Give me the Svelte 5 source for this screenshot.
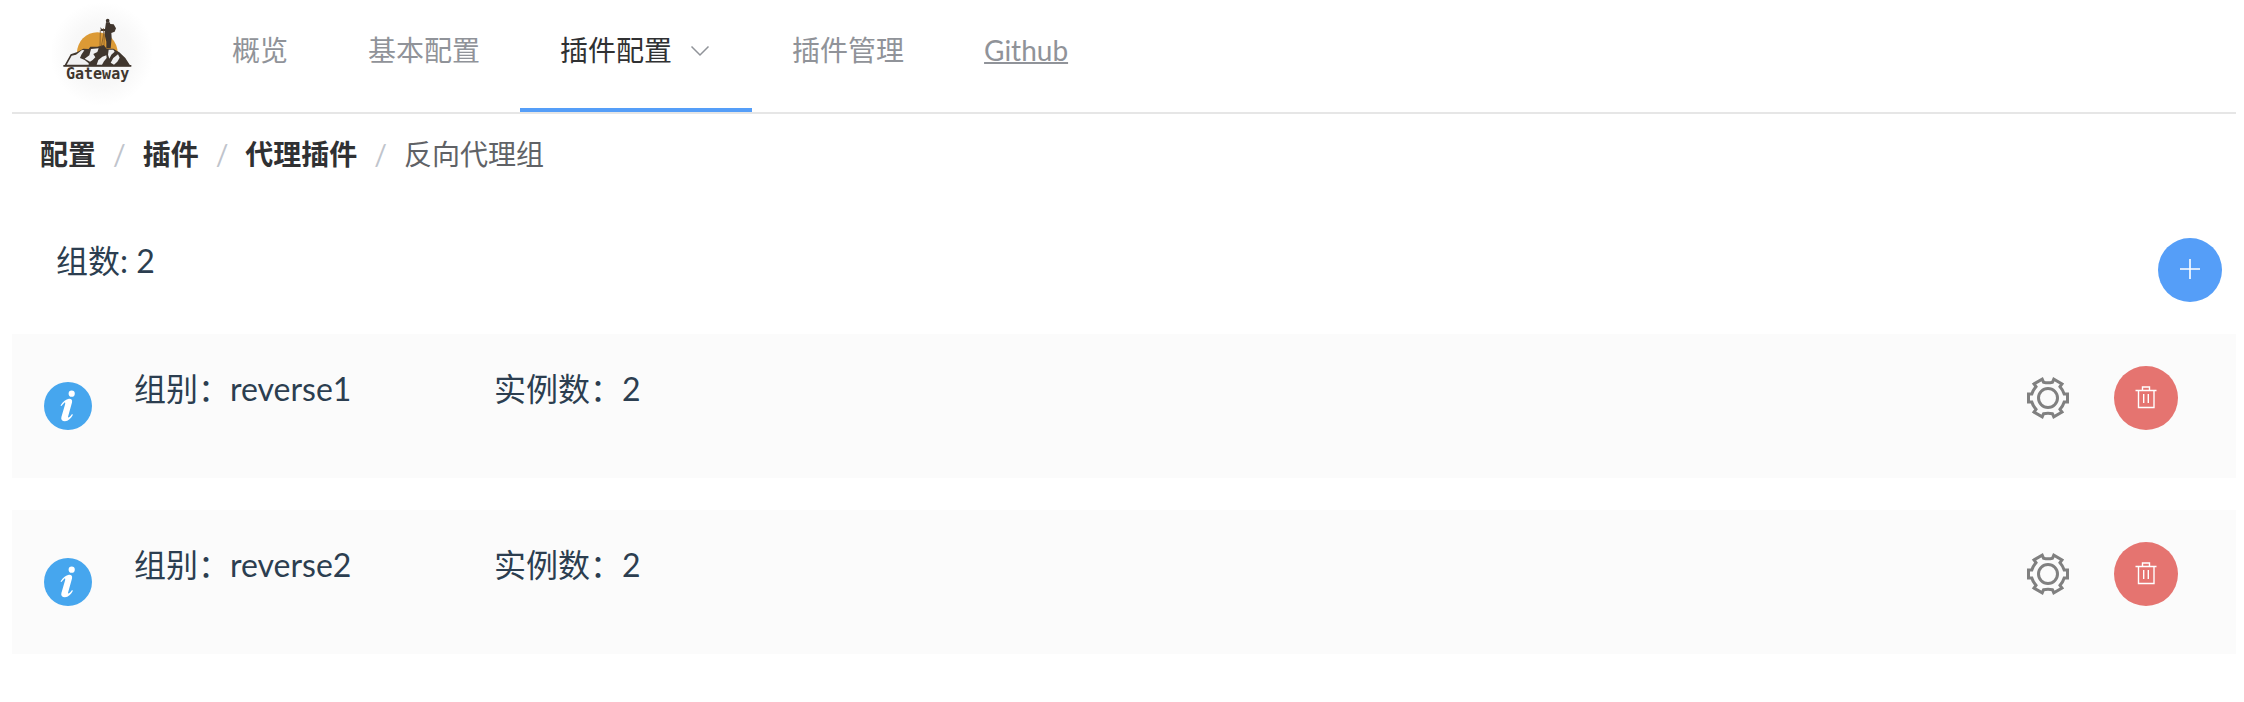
<script>
  const menu = [
    { label: '概览', href: '#overview' },
    { label: '基本配置', href: '#basic' },
    { label: '插件配置', href: '#plugins', active: true, submenu: true },
    { label: '插件管理', href: '#manage' },
    { label: 'Github', href: '#github', external: true }
  ];

  const crumbs = [
    { label: '配置', href: '#config' },
    { label: '插件', href: '#plugin' },
    { label: '代理插件', href: '#proxy' },
    { label: '反向代理组' }
  ];

  let groups = $state([
    { name: 'reverse1', instances: 2 },
    { name: 'reverse2', instances: 2 }
  ]);

  function addGroup() {
    groups.push({ name: `reverse${groups.length + 1}`, instances: 0 });
  }

  function removeGroup(index) {
    groups.splice(index, 1);
  }
</script>

<div class="page">
  <header class="topbar">
    <svg class="logo" viewBox="-18 -42 300 324" role="img" aria-label="Gateway">
      <defs>
        <radialGradient id="halo">
          <stop offset="0" stop-color="#f4f4f5" />
          <stop offset="0.6" stop-color="#f8f8f8" />
          <stop offset="1" stop-color="#ffffff" />
        </radialGradient>
      </defs>
      <circle cx="132" cy="120" r="156" fill="url(#halo)" />
      <path d="M57 116a61 61 0 1 1 122 0l-20 14H70z" fill="#dc9a35" />
      <g fill="#40362e">
        <path d="M18 157L38 121L58 114L76 104L92 105L97 98L118 98L137 93L146 104L166 104L184 115L202 132L218 157z" />
        <path d="M16 153h204v5H16z" />
        <circle cx="149" cy="20" r="5.500" />
        <path d="M144 25h11l2 5 10 1 7 12-4 10-10 4 1 14-3 32h-13v-20l-4-16v-16l-12 0-2-11 5 5 9 0z" />
      </g>
      <path d="M136 42l1 18-7 38M139 52l-1 44M127 48l-1 50" fill="none" stroke="#6b4c25" stroke-width="2" />
      <g fill="#f0f0f1">
        <path d="M26 152L41 125L54 122L72 108L79 109L70 122L66 132L80 138L92 148L92 152z" />
        <path d="M99 105L122 103L118 114L106 120L112 130L104 138L96 143L80 134L94 124z" />
        <path d="M116 152L121 138L133 128L145 124L146 132L138 142L132 152z" />
        <path d="M152 107L166 107L170 113L160 122L154 134L150 122z" />
        <path d="M158 146L166 132L180 121L185 131L178 143L168 152z" />
      </g>
      <text x="24" y="196" class="logo-text">Gateway</text>
    </svg>

    <nav class="menu" aria-label="主导航">
      {#each menu as item}
        <a class="menu-item" class:active={item.active} class:external={item.external} href={item.href}>
          {item.label}
          {#if item.submenu}
            <svg class="chevron" viewBox="0 0 24 24" aria-hidden="true">
              <path d="M3.500 8.500l8.500 8.500 8.500-8.500" />
            </svg>
          {/if}
        </a>
      {/each}
    </nav>
  </header>

  <nav class="breadcrumb" aria-label="路径">
    {#each crumbs as crumb, i}
      {#if i > 0}<span class="separator">/</span>{/if}
      {#if crumb.href}
        <a href={crumb.href}>{crumb.label}</a>
      {:else}
        <span class="current">{crumb.label}</span>
      {/if}
    {/each}
  </nav>

  <main>
    <div class="summary">
      <span class="count">组数: {groups.length}</span>
      <button class="round primary" type="button" aria-label="添加" onclick={addGroup}>
        <svg viewBox="0 0 28 28" aria-hidden="true">
          <path d="M14 3v20M4 13h20" stroke-width="1.600" />
        </svg>
      </button>
    </div>

    <ul class="groups">
      {#each groups as group, i}
        <li class="group">
          <svg class="info" viewBox="0 0 48 48" aria-hidden="true">
            <circle cx="24" cy="24" r="24" fill="#46a6ee" />
            <circle cx="27.700" cy="11.700" r="3.100" fill="#fff" />
            <path d="M16.500 23.500c2.500-3.800 5.600-6.400 8.400-6.700 2.500-.2 3.700 1.200 3.100 3.600l-3.900 14c-.3 1.200.4 1.300 1.200.7 1.100-.8 1.700-1.700 2.700-3l.9.6c-1.700 3.500-4.700 6.500-8 6.500-2.900 0-4.200-1.600-3.500-4.200l3.700-12.800c.4-1.600-.1-2-1-1.300-1 .8-1.700 1.800-2.700 3.200z" fill="#fff" />
          </svg>
          <span class="name">组别：{group.name}</span>
          <span class="instances">实例数：{group.instances}</span>
          <div class="actions">
            <button class="settings" type="button" aria-label="设置">
              <svg viewBox="0 0 44 44" aria-hidden="true">
                <circle cx="22" cy="22" r="9.500" />
                <path d="M17.500 6.200q4.500 1.100 9 0l1.300-3 8.200 4.700-2 2.800q3 3.300 4.200 7.300h3.300v8h-3.300q-1.200 4-4.200 7.300l2 2.800-8.200 4.700-1.300-3q-4.500-1.100-9 0l-1.300 3-8.200-4.700 2-2.800q-3-3.300-4.200-7.300h-3.300v-8h3.300q1.200-4 4.200-7.300l-2-2.800 8.200-4.700z" />
              </svg>
            </button>
            <button class="round danger" type="button" aria-label="删除" onclick={() => removeGroup(i)}>
              <svg viewBox="0 0 28 28" aria-hidden="true">
                <path d="M3.500 6.500h21M6.500 6.500v17h15.500v-17M10.500 6v-3h7v3M11.700 10v9M16.300 10v9" stroke-width="1.400" />
              </svg>
            </button>
          </div>
        </li>
      {/each}
    </ul>
  </main>
</div>

<style>
  :global(body) {
    background: #fff;
  }

  .page {
    padding: 0 8px 48px 12px;
    font-family: Lato, "Noto Sans CJK SC", sans-serif;
    font-size: 28px;
    color: #2c3e50;
  }

  a {
    color: inherit;
    text-decoration: none;
  }

  button {
    display: flex;
    align-items: center;
    justify-content: center;
    padding: 0;
    border: 0;
    background: none;
    cursor: pointer;
  }

  .topbar {
    display: flex;
    border-bottom: 2px solid #e6e6e6;
  }

  .logo {
    width: 100px;
    height: 108px;
    margin: 0 40px;
  }

  .logo-text {
    font: bold 45px "DejaVu Sans Mono", monospace;
    fill: #40362e;
  }

  .menu {
    display: flex;
  }

  .menu-item {
    display: flex;
    align-items: center;
    gap: 16px;
    padding: 0 40px 8px;
    border-bottom: 4px solid transparent;
    line-height: 100px;
    color: #909399;
  }

  .menu-item.active {
    border-color: #559ef8;
    color: #303133;
  }

  .menu-item.external {
    text-decoration: underline;
    text-decoration-thickness: 2px;
  }

  .chevron {
    width: 24px;
    height: 24px;
    fill: none;
    stroke: #909399;
    stroke-width: 1.500;
  }

  .breadcrumb {
    display: flex;
    gap: 17px;
    padding: 20px 28px;
    line-height: 40px;
  }

  .breadcrumb a {
    font-weight: 700;
    color: #303133;
  }

  .separator {
    color: #c0c4cc;
  }

  .current {
    color: #606266;
  }

  .summary {
    display: flex;
    justify-content: space-between;
    padding: 44px 14px 32px 44px;
    font-size: 32px;
  }

  .count {
    line-height: 46px;
  }

  .round {
    width: 64px;
    height: 64px;
    border-radius: 50%;
  }

  .round svg {
    width: 28px;
    height: 28px;
    fill: none;
    stroke: #fff;
  }

  .primary {
    background: #559ef8;
  }

  .danger {
    background: #e57470;
  }

  .groups {
    display: grid;
    gap: 32px;
    margin: 0;
    padding: 0;
    list-style: none;
  }

  .group {
    display: grid;
    grid-template-columns: 48px 318px 1fr auto;
    column-gap: 42px;
    align-items: start;
    padding: 32px 58px 48px 32px;
    background: #fbfbfb;
    font-size: 32px;
    line-height: 46px;
  }

  .info {
    width: 48px;
    height: 48px;
    margin-top: 16px;
  }

  .actions {
    display: flex;
    align-items: center;
    gap: 44px;
  }

  .settings svg {
    width: 44px;
    height: 44px;
    fill: none;
    stroke: #808080;
    stroke-width: 3;
  }
</style>
